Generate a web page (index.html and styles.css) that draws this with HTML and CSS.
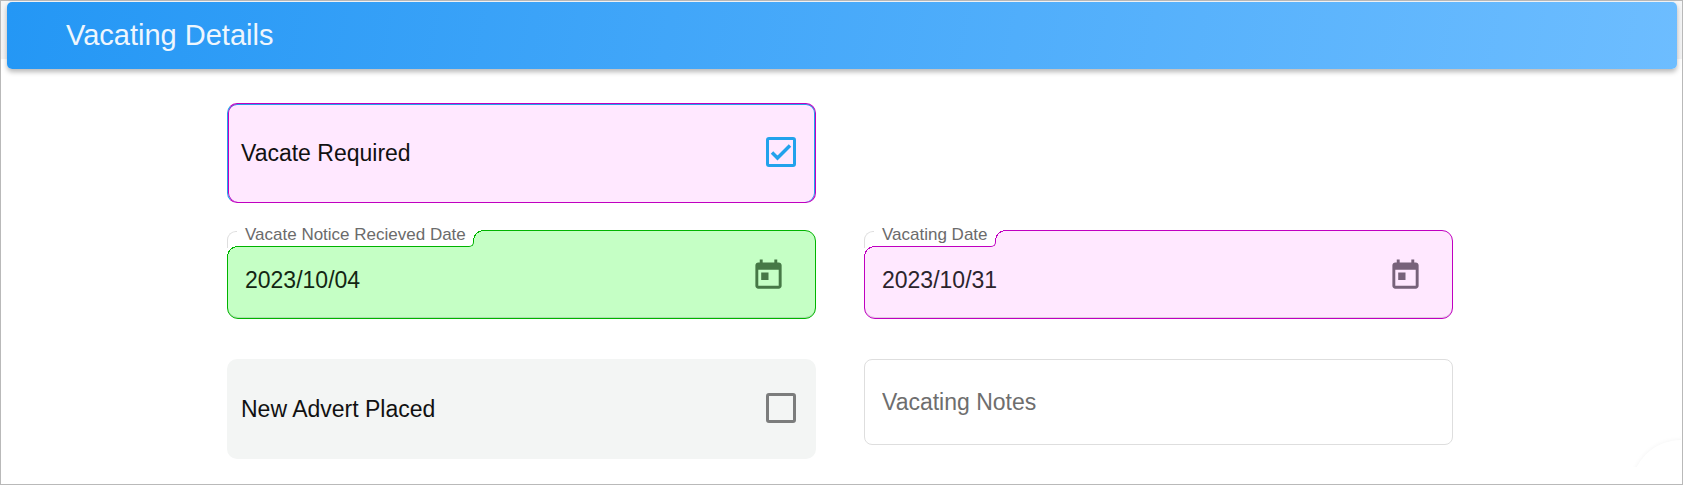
FILE: index.html
```html
<!DOCTYPE html>
<html lang="en">
<head>
<meta charset="utf-8">
<meta name="viewport" content="width=device-width, initial-scale=1">
<title>Vacating Details</title>
<link rel="stylesheet" href="styles.css">
</head>
<body>
<main class="panel">
  <header class="panel-header"><h1 class="panel-title">Vacating Details</h1></header>
  <form class="form-grid">
    <div class="check-card check-card-required">
      <label class="check-label" for="vacate-required">Vacate Required</label>
      <span class="check-wrap">
        <input class="check" type="checkbox" id="vacate-required" checked>
        <svg class="check-mark" viewBox="0 0 30 30" aria-hidden="true"><path d="M6 15.500 11.500 21 24 8.500"/></svg>
      </span>
    </div>

    <div class="date-field date-field-green row-start">
      <span class="tab"><label class="tab-label" for="notice-date">Vacate Notice Recieved Date</label></span>
      <input class="date-input" type="text" id="notice-date" value="2023/10/04">
      <button class="date-button" type="button" aria-label="Open calendar">
        <svg class="date-icon" viewBox="0 0 24 24" aria-hidden="true"><path d="M19 3h-1V1h-2v2H8V1H6v2H5c-1.110 0-1.990.9-1.990 2L3 19c0 1.100.890 2 2 2h14c1.100 0 2-.9 2-2V5c0-1.100-.9-2-2-2zm0 16H5V8h14v11zM7 10h5v5H7z"/></svg>
      </button>
    </div>

    <div class="date-field date-field-pink">
      <span class="tab"><label class="tab-label" for="vacating-date">Vacating Date</label></span>
      <input class="date-input" type="text" id="vacating-date" value="2023/10/31">
      <button class="date-button" type="button" aria-label="Open calendar">
        <svg class="date-icon" viewBox="0 0 24 24" aria-hidden="true"><path d="M19 3h-1V1h-2v2H8V1H6v2H5c-1.110 0-1.990.9-1.990 2L3 19c0 1.100.890 2 2 2h14c1.100 0 2-.9 2-2V5c0-1.100-.9-2-2-2zm0 16H5V8h14v11zM7 10h5v5H7z"/></svg>
      </button>
    </div>

    <div class="check-card">
      <label class="check-label" for="new-advert">New Advert Placed</label>
      <span class="check-wrap"><input class="check" type="checkbox" id="new-advert"></span>
    </div>

    <input class="notes" type="text" aria-label="Vacating Notes" placeholder="Vacating Notes">
  </form>
  <div class="corner" aria-hidden="true"></div>
</main>
</body>
</html>
```

FILE: styles.css
```css
* { box-sizing: border-box; }

body {
  margin: 0;
  background: #fff;
  color: #111;
  font-family: "Liberation Sans", Arial, sans-serif;
  font-size: 23px;
}

input, button { font: inherit; color: inherit; }

.panel {
  position: relative;
  min-height: 100vh;
  padding: 1px 5px 24px 6px;
  border: 1px solid #b9b9b9;
  background: linear-gradient(#f5f6f7, #f3f3f4) no-repeat 0 0 / 100% 58px #fff;
}

.panel-header {
  display: flex;
  align-items: center;
  min-height: 67px;
  padding: 0 59px;
  border-radius: 5px;
  background: linear-gradient(100deg, #2497f5, #6dbdff);
  box-shadow: 0 3px 5px rgba(0, 0, 0, .28);
}

.panel-title {
  margin: 0;
  padding-bottom: 2px;
  color: #eef6fd;
  font-size: 29px;
  font-weight: 400;
  line-height: 34px;
}

.form-grid {
  display: grid;
  grid-template-columns: 1fr 1fr;
  gap: 27px 48px;
  align-items: start;
  padding: 34px 224px 0 220px;
}

.check-card {
  display: flex;
  align-items: center;
  justify-content: space-between;
  min-height: 100px;
  padding: 0 20px 2px 14px;
  border-radius: 10px;
  background: #f3f5f4;
}

.check-card-required {
  padding: 0 19px 2px 13px;
  border: 1px solid #c000c0;
  border-left-color: #22a2ec;
  background: #ffe8ff;
  box-shadow: inset 1px 0 #c000c0, inset -1px 0 #22a2ec, inset 0 1px #22a2ec;
}

.check-label { padding-top: 1px; line-height: 28px; }

.check-wrap { position: relative; display: flex; }

.check {
  appearance: none;
  width: 30px;
  height: 30px;
  margin: 0;
  border: 3px solid #7b7c7c;
  border-radius: 3px;
}

.check:checked { border-color: #22a2ec; }

.check-mark {
  position: absolute;
  inset: 0;
  width: 30px;
  height: 30px;
  fill: none;
  stroke: #22a2ec;
  stroke-width: 3.500;
  pointer-events: none;
}

.date-field {
  position: relative;
  display: flex;
  align-items: center;
  min-height: 89px;
  margin-bottom: 13px;
  padding: 2px 29px 0 17px;
  border: 1px solid var(--line);
  border-radius: 11px;
  background: var(--fill);
  box-shadow: inset 0 -1px rgba(0, 0, 0, .12);
}

.row-start { grid-column: 1; }

.date-field-green { --line: #00b400; --fill: #c5ffc5; --ink: #132613; --icon: #467846; }
.date-field-pink { --line: #c000c0; --fill: #ffe8ff; --ink: #2b242c; --icon: #77627a; }

.date-input {
  flex: 1;
  min-width: 0;
  padding: 9px 0 0;
  border: 0;
  outline: 0;
  background: none;
  color: var(--ink);
}

.date-button {
  display: flex;
  padding: 0;
  border: 0;
  background: none;
}

.date-icon { width: 35px; height: 35px; fill: var(--icon); }

/* Label tab cut out of the field's top left corner. */
.tab {
  position: absolute;
  top: -5px;
  left: -1px;
  height: 21px;
  padding: 0 7px 0 18px;
  border: solid var(--line);
  border-width: 0 1px 1px 0;
  border-bottom-right-radius: 5px;
  background: #fff;
}

.tab::before,
.tab::after {
  content: "";
  position: absolute;
  width: 11px;
  height: 11px;
  background: radial-gradient(circle at 100% 100%, var(--fill) 10px, var(--line) 10px 11px, #fff 11px);
}

.tab::before { left: 0; bottom: -11px; }
.tab::after { top: 0; right: -11px; height: 15px; }

.tab-label {
  display: block;
  color: #6b6b6b;
  font-size: 17px;
  line-height: 17px;
  white-space: nowrap;
}

.tab-label::before {
  content: "";
  position: absolute;
  top: 5px;
  left: 0;
  width: 9px;
  height: 16px;
  border-left: 1px solid #dedede;
  border-top: 1px solid #dedede;
  border-top-left-radius: 9px;
}

.notes {
  width: 100%;
  height: 86px;
  padding: 0 17px;
  border: 1px solid #dedede;
  border-radius: 8px;
  background: #fff;
}

.notes::placeholder { color: #6e6e6e; opacity: 1; }

/* Faint edge of a round button beyond the corner. */
.corner {
  position: absolute;
  right: 1px;
  bottom: 17px;
  width: 54px;
  height: 32px;
  overflow: hidden;
  pointer-events: none;
}

.corner::before {
  content: "";
  position: absolute;
  top: 5px;
  left: 4px;
  width: 100px;
  height: 100px;
  border-radius: 50%;
  box-shadow: 0 0 5px rgba(0, 0, 0, .05);
  background: #fff;
}

@media (max-width: 1100px) {
  .form-grid { padding-left: 24px; padding-right: 24px; }
}

@media (max-width: 700px) {
  .form-grid { grid-template-columns: 1fr; }
}
```
